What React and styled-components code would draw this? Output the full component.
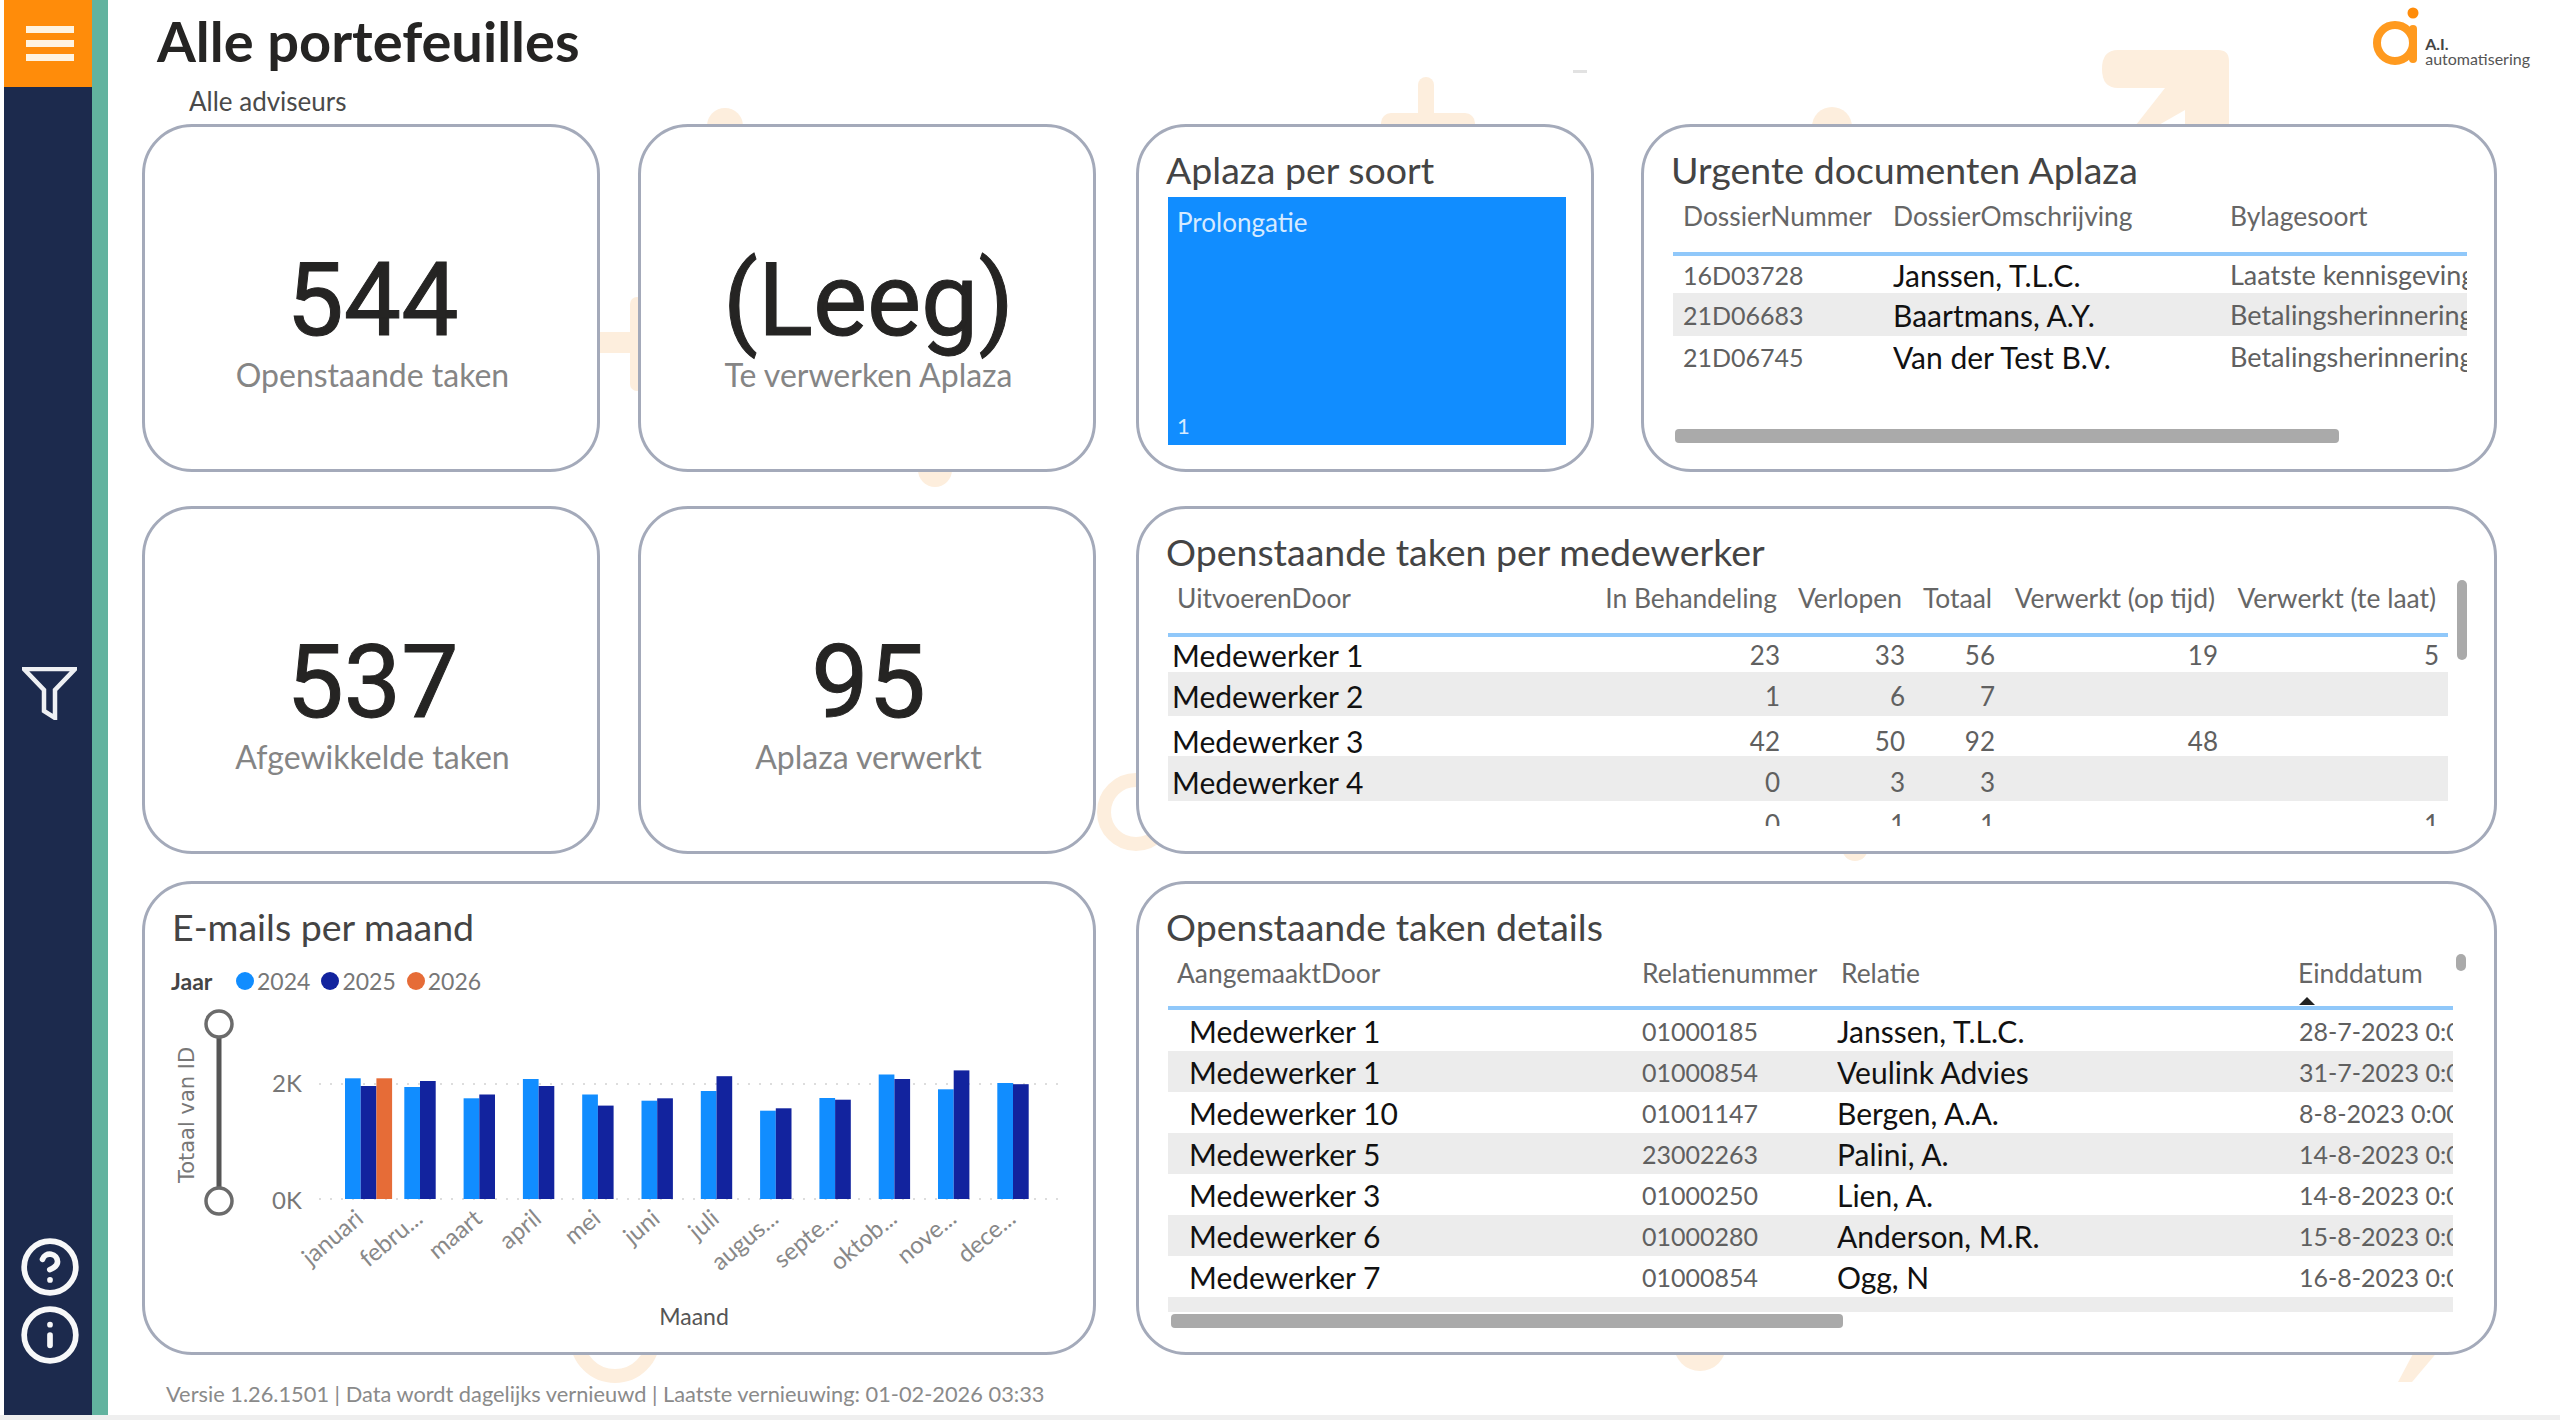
import styled, { createGlobalStyle } from "styled-components";
import { CircleHelp, Info } from "lucide-react";

const GlobalStyle = createGlobalStyle`
  html, body {
    margin: 0;
    padding: 0;
    background: #fff;
  }

  * {
    box-sizing: border-box;
  }
`;

const urgentRows = [
  { h: 37, cells: ["16D03728", "Janssen, T.L.C.", "Laatste kennisgeving"] },
  { h: 43, cells: ["21D06683", "Baartmans, A.Y.", "Betalingsherinnering"], shade: true },
  { h: 42, cells: ["21D06745", "Van der Test B.V.", "Betalingsherinnering"] },
];

const taskRows = [
  { h: 35, pad: 0, name: "Medewerker 1", cells: ["23", "33", "56", "19", "5"] },
  { h: 44, pad: 3, name: "Medewerker 2", cells: ["1", "6", "7", "", ""], shade: true },
  { h: 40, pad: 7, name: "Medewerker 3", cells: ["42", "50", "92", "48", ""] },
  { h: 45, pad: 6, name: "Medewerker 4", cells: ["0", "3", "3", "", ""], shade: true },
  { h: 42, pad: 4, name: "", cells: ["0", "1", "1", "", "1"] },
];

const detailRows = [
  ["Medewerker 1", "01000185", "Janssen, T.L.C.", "28-7-2023 0:00"],
  ["Medewerker 1", "01000854", "Veulink Advies", "31-7-2023 0:00"],
  ["Medewerker 10", "01001147", "Bergen, A.A.", "8-8-2023 0:00"],
  ["Medewerker 5", "23002263", "Palini, A.", "14-8-2023 0:00"],
  ["Medewerker 3", "01000250", "Lien, A.", "14-8-2023 0:00"],
  ["Medewerker 6", "01000280", "Anderson, M.R.", "15-8-2023 0:00"],
  ["Medewerker 7", "01000854", "Ogg, N", "16-8-2023 0:00"],
  ["", "", "", ""],
];

const months = [
  { label: "januari", bars: [120.7, 113, 120.7] },
  { label: "febru...", bars: [112, 118] },
  { label: "maart", bars: [100.7, 104.5] },
  { label: "april", bars: [120, 113] },
  { label: "mei", bars: [104.5, 93.4] },
  { label: "juni", bars: [98.3, 100.7] },
  { label: "juli", bars: [108, 122.8] },
  { label: "augus...", bars: [88.3, 90.7] },
  { label: "septe...", bars: [101, 99.3] },
  { label: "oktob...", bars: [124.5, 120] },
  { label: "nove...", bars: [109.7, 128.6] },
  { label: "dece...", bars: [116, 114.8] },
];

const barColors = ["#118dff", "#12239e", "#e66c37"];

function Watermarks() {
  return (
    <WatermarkLayer viewBox="0 0 2560 1420" fill="#fdeedd">
      <rect x="1418" y="77" width="16" height="60" rx="8" />
      <rect x="1381" y="113" width="94" height="24" rx="10" />
      <circle cx="1832" cy="127" r="20" />
      <path d="M2118 50 H2218 Q2229 50 2229 61 V130 H2185 V110 L2150 130 H2132 L2165 88 H2118 Q2102 88 2102 69 Q2102 50 2118 50 Z" />
      <circle cx="725" cy="126" r="18" />
      <rect x="630" y="297" width="14" height="94" rx="7" />
      <rect x="600" y="332" width="40" height="21" />
      <circle cx="935" cy="470" r="17" />
      <circle cx="1855" cy="848" r="13" />
      <circle cx="1700" cy="1345" r="26" />
      <polygon points="2415,1350 2439,1350 2412,1382 2398,1382" />
      <FaintRing cx="1136" cy="812" r="32" />
      <FaintRing cx="615" cy="1338" r="38" />
      <rect x="1573" y="70" width="14" height="3" fill="#e2e2e2" />
    </WatermarkLayer>
  );
}

function Kpi({ value, label }) {
  return (
    <KpiCard>
      <KpiValue>{value}</KpiValue>
      <KpiLabel>{label}</KpiLabel>
    </KpiCard>
  );
}

function EmailChart() {
  return (
    <ChartSvg viewBox="0 0 900 340">
      <text x="-116" y="20" transform="rotate(-90)" textAnchor="middle" fontFamily="DejaVu Sans, sans-serif" fontSize="21" fill="#777">
        Totaal van ID
      </text>
      <line x1="45" y1="38" x2="45" y2="189" stroke="#555" strokeWidth="5" />
      <circle cx="45" cy="25" r="13" fill="#fff" stroke="#6b6b6b" strokeWidth="3.5" />
      <circle cx="45" cy="202" r="13" fill="#fff" stroke="#6b6b6b" strokeWidth="3.5" />

      <line x1="145" y1="85" x2="893" y2="85" stroke="#ddd" strokeWidth="2" strokeDasharray="2 9" />
      <line x1="145" y1="200" x2="893" y2="200" stroke="#ddd" strokeWidth="2" strokeDasharray="2 9" />
      <AxisValue x="98" y="93">2K</AxisValue>
      <AxisValue x="98" y="210">0K</AxisValue>

      {months.map((month, i) => {
        const groupX = 171 + i * 59.3;
        return (
          <g key={month.label}>
            {month.bars.map((height, j) => (
              <rect key={j} x={groupX + j * 15.7} y={200 - height} width="15.7" height={height} fill={barColors[j]} />
            ))}
            <MonthLabel x={groupX + 20} y="222" textAnchor="end" transform={`rotate(-40 ${groupX + 20} 222)`}>
              {month.label}
            </MonthLabel>
          </g>
        );
      })}

      <AxisTitle x="520" y="326" textAnchor="middle">Maand</AxisTitle>
    </ChartSvg>
  );
}

export default function App() {
  return (
    <>
      <GlobalStyle />
      <Page>
        <Watermarks />
        <Shell>
          <Sidebar>
            <MenuButton>
              <MenuBar />
              <MenuBar />
              <MenuBar />
            </MenuButton>
            <FilterIcon viewBox="0 0 55 53">
              <path d="M2 2 H53 L33 23 V51 L22 44 V23 Z" fill="none" stroke="#eef0f3" strokeWidth="4.5" strokeLinejoin="miter" />
            </FilterIcon>
            <SideFoot>
              <CircleHelp size={62} strokeWidth={2.2} color="#f7f8f9" />
              <Info size={62} strokeWidth={2.2} color="#f7f8f9" />
            </SideFoot>
          </Sidebar>
          <AccentStripe />

          <Main>
            <Header>
              <div>
                <PageTitle>Alle portefeuilles</PageTitle>
                <Subtitle>Alle adviseurs</Subtitle>
              </div>
              <Logo>
                <svg width="46" height="66" viewBox="0 0 46 66">
                  <circle cx="22" cy="37" r="18" fill="none" stroke="#ff9a1f" strokeWidth="8" />
                  <rect x="36" y="19" width="8" height="38" rx="4" fill="#ff9a1f" />
                  <circle cx="40" cy="7" r="5.5" fill="#ff8c0a" />
                </svg>
                <LogoText>
                  <strong>A.I.</strong>
                  <span>automatisering</span>
                </LogoText>
              </Logo>
            </Header>

            <Row>
              <Pair>
                <Kpi value="544" label="Openstaande taken" />
                <Kpi value="(Leeg)" label="Te verwerken Aplaza" />
              </Pair>
              <TopRight>
                <SmallCard>
                  <CardTitle>Aplaza per soort</CardTitle>
                  <Tile>
                    <span>Prolongatie</span>
                    <span>1</span>
                  </Tile>
                </SmallCard>
                <WideCard>
                  <CardTitle>Urgente documenten Aplaza</CardTitle>
                  <TableWrap $width={794}>
                    <HeadRow $columns="220px 337px 1fr" $inset={10} $height={66}>
                      <span>DossierNummer</span>
                      <span>DossierOmschrijving</span>
                      <span>Bylagesoort</span>
                    </HeadRow>
                    {urgentRows.map((row) => (
                      <DataRow key={row.cells[0]} $columns="220px 337px 1fr" $inset={10} $h={row.h} $shade={row.shade}>
                        <MutedCell>{row.cells[0]}</MutedCell>
                        <NameCell>{row.cells[1]}</NameCell>
                        <MutedCell $size={27}>{row.cells[2]}</MutedCell>
                      </DataRow>
                    ))}
                    <HorizontalThumb $left={2} $width={664} $top={239} />
                  </TableWrap>
                </WideCard>
              </TopRight>
            </Row>

            <Row $top={34}>
              <Pair>
                <Kpi value="537" label="Afgewikkelde taken" />
                <Kpi value="95" label="Aplaza verwerkt" />
              </Pair>
              <Card $height={348}>
                <CardTitle>Openstaande taken per medewerker</CardTitle>
                <TableWrap $width={1280}>
                  <HeadRow $columns="422px 190px 125px 90px 223px 221px 9px" $inset={9} $height={65} $numeric>
                    <span>UitvoerenDoor</span>
                    <span>In Behandeling</span>
                    <span>Verlopen</span>
                    <span>Totaal</span>
                    <span>Verwerkt (op tijd)</span>
                    <span>Verwerkt (te laat)</span>
                  </HeadRow>
                  <ClippedBody $height={189}>
                    {taskRows.map((row, i) => (
                      <DataRow key={i} $columns="422px 190px 125px 90px 223px 221px 9px" $inset={4} $h={row.h} $pad={row.pad} $shade={row.shade} $numeric>
                        <NameCell>{row.name}</NameCell>
                        {row.cells.map((cell, j) => (
                          <MutedCell key={j} $size={26}>{cell}</MutedCell>
                        ))}
                      </DataRow>
                    ))}
                  </ClippedBody>
                  <VerticalThumb $top={8} $height={80} $right={-19} />
                </TableWrap>
              </Card>
            </Row>

            <Row $top={27}>
              <Card $height={474}>
                <CardTitle>E-mails per maand</CardTitle>
                <Legend>
                  <LegendName>Jaar</LegendName>
                  <LegendItem $color={barColors[0]}>2024</LegendItem>
                  <LegendItem $color={barColors[1]}>2025</LegendItem>
                  <LegendItem $color={barColors[2]}>2026</LegendItem>
                </Legend>
                <EmailChart />
              </Card>
              <Card $height={474}>
                <CardTitle>Openstaande taken details</CardTitle>
                <TableWrap $width={1285}>
                  <HeadRow $columns="474px 199px 457px 1fr" $inset={9} $height={63}>
                    <span>AangemaaktDoor</span>
                    <span>Relatienummer</span>
                    <span>Relatie</span>
                    <span>Einddatum</span>
                    <SortMark />
                  </HeadRow>
                  <ClippedBody $height={302}>
                    {detailRows.map((cells, i) => (
                      <DataRow key={i} $columns="474px 195px 462px 1fr" $inset={21} $h={41} $shade={i % 2 === 1}>
                        <NameCell>{cells[0]}</NameCell>
                        <MutedCell>{cells[1]}</MutedCell>
                        <NameCell>{cells[2]}</NameCell>
                        <MutedCell>{cells[3]}</MutedCell>
                      </DataRow>
                    ))}
                  </ClippedBody>
                  <HorizontalThumb $left={3} $width={672} $top={367} />
                  <VerticalThumb $top={7} $height={17} $right={-13} />
                </TableWrap>
              </Card>
            </Row>

            <Footer>Versie 1.26.1501 | Data wordt dagelijks vernieuwd | Laatste vernieuwing: 01-02-2026 03:33</Footer>
          </Main>
        </Shell>
        <BottomEdge />
      </Page>
    </>
  );
}

const Page = styled.div`
  position: relative;
  width: 2560px;
  height: 1420px;
  overflow: hidden;
  background: #fff;
  font-family: "Lato", "Noto Sans", sans-serif;
`;

const WatermarkLayer = styled.svg`
  position: absolute;
  top: 0;
  left: 0;
  width: 2560px;
  height: 1420px;
`;

const FaintRing = styled.circle`
  fill: none;
  stroke: #fdeedd;
  stroke-width: 14;
`;

const Shell = styled.div`
  position: relative;
  display: flex;
  height: 1415px;
  padding-left: 4px;
`;

const BottomEdge = styled.div`
  position: relative;
  height: 5px;
  background: #efefef;
`;

const Sidebar = styled.aside`
  display: flex;
  flex-direction: column;
  align-items: center;
  width: 88px;
  background: #1c2a4d;
`;

const MenuButton = styled.div`
  display: flex;
  flex-direction: column;
  align-items: center;
  justify-content: center;
  gap: 7px;
  width: 100%;
  height: 87px;
  padding-left: 3px;
  background: #ff8c0a;
`;

const MenuBar = styled.span`
  width: 48px;
  height: 7px;
  background: #fff3e0;
`;

const FilterIcon = styled.svg`
  width: 55px;
  height: 53px;
  margin: 580px 0 0 3px;
`;

const SideFoot = styled.div`
  display: flex;
  flex-direction: column;
  align-items: center;
  gap: 6px;
  margin: auto 0 49px 3px;
`;

const AccentStripe = styled.div`
  width: 16px;
  background: #62b39f;
`;

const Main = styled.main`
  display: flex;
  flex-direction: column;
  flex: 1;
  padding: 0 63px 0 34px;
`;

const Header = styled.header`
  display: flex;
  justify-content: space-between;
  align-items: flex-start;
  height: 124px;
  margin-right: -33px;
`;

const PageTitle = styled.h1`
  margin: 9px 0 0 15px;
  font-size: 56px;
  line-height: 64px;
  font-weight: 700;
  color: #252423;
`;

const Subtitle = styled.div`
  margin: 12px 0 0 47px;
  font-size: 26px;
  line-height: 32px;
  color: #4a4a4a;
`;

const Logo = styled.div`
  display: flex;
  align-items: flex-start;
  gap: 6px;
  margin-top: 6px;
`;

const LogoText = styled.div`
  display: flex;
  flex-direction: column;
  margin-top: 30px;
  font-size: 16px;
  line-height: 15px;
  color: #555;

  strong {
    font-size: 16px;
    color: #444;
  }
`;

const Row = styled.section`
  display: grid;
  grid-template-columns: 954px 1361px;
  column-gap: 40px;
  margin-top: ${({ $top }) => $top || 0}px;
`;

const Pair = styled.div`
  display: flex;
  gap: 38px;
`;

const TopRight = styled.div`
  display: flex;
  gap: 47px;
`;

const Card = styled.article`
  position: relative;
  height: ${({ $height }) => $height}px;
  padding: 23px 0 0 29px;
  border: 3px solid #a4aaba;
  border-radius: 50px;
  background: #fff;
`;

const SmallCard = styled(Card)`
  width: 458px;
  height: 348px;
`;

const WideCard = styled(Card)`
  width: 856px;
  height: 348px;
`;

const KpiCard = styled(Card)`
  display: flex;
  flex-direction: column;
  align-items: center;
  width: 458px;
  height: 348px;
  padding: 0 0 0 3px;
`;

const KpiValue = styled.div`
  margin-top: 121px;
  font-family: "Roboto", sans-serif;
  font-size: 102px;
  line-height: 104px;
  font-weight: 400;
  color: #252423;
  -webkit-text-stroke: 1px #252423;
`;

const KpiLabel = styled.div`
  margin-top: 5px;
  font-size: 32px;
  line-height: 36px;
  color: #858585;
`;

const CardTitle = styled.h2`
  margin: 0 0 0 -2px;
  font-size: 37.5px;
  line-height: 40px;
  font-weight: 400;
  color: #444;
`;

const Tile = styled.div`
  display: flex;
  flex-direction: column;
  justify-content: space-between;
  width: 398px;
  height: 248px;
  margin-top: 7px;
  padding: 10px 9px 4px;
  background: #118dff;
  font-size: 26px;
  line-height: 30px;
  color: #d6eaff;

  span:last-child {
    font-size: 22px;
  }
`;

const TableWrap = styled.div`
  position: relative;
  width: ${({ $width }) => $width}px;
`;

const HeadRow = styled.div`
  position: relative;
  display: grid;
  grid-template-columns: ${({ $columns }) => $columns};
  height: ${({ $height }) => $height}px;
  padding-top: 10px;
  border-bottom: 4px solid #90c8fa;
  font-size: 26.4px;
  line-height: 32px;
  color: #666;
  white-space: nowrap;

  span:first-child {
    padding-left: ${({ $inset }) => $inset}px;
  }

  span:not(:first-child) {
    padding-right: ${({ $numeric }) => ($numeric ? 3 : 0)}px;
    text-align: ${({ $numeric }) => ($numeric ? "right" : "left")};
  }
`;

const SortMark = styled.i`
  position: absolute;
  left: 1131px;
  top: 50px;
  width: 0;
  height: 0;
  border-left: 8px solid transparent;
  border-right: 8px solid transparent;
  border-bottom: 8px solid #222;
`;

const DataRow = styled.div`
  display: grid;
  grid-template-columns: ${({ $columns }) => $columns};
  align-items: center;
  height: ${({ $h }) => $h}px;
  padding-top: ${({ $pad }) => $pad || 0}px;
  background: ${({ $shade }) => ($shade ? "#ececec" : "transparent")};
  white-space: nowrap;
  overflow: hidden;

  > *:first-child {
    padding-left: ${({ $inset }) => $inset}px;
  }

  > *:not(:first-child) {
    overflow: hidden;
    text-align: ${({ $numeric }) => ($numeric ? "right" : "left")};
  }
`;

const ClippedBody = styled.div`
  height: ${({ $height }) => $height}px;
  overflow: hidden;
`;

const NameCell = styled.div`
  font-size: 30px;
  line-height: 36px;
  color: #111;
`;

const MutedCell = styled.div`
  font-size: ${({ $size }) => $size || 25}px;
  line-height: 36px;
  color: #606060;
`;

const HorizontalThumb = styled.div`
  position: absolute;
  left: ${({ $left }) => $left}px;
  top: ${({ $top }) => $top}px;
  width: ${({ $width }) => $width}px;
  height: 14px;
  border-radius: 4px;
  background: #aaa;
`;

const VerticalThumb = styled.div`
  position: absolute;
  right: ${({ $right }) => $right}px;
  top: ${({ $top }) => $top}px;
  width: 10px;
  height: ${({ $height }) => $height}px;
  border-radius: 5px;
  background: #aaa;
`;

const Legend = styled.div`
  display: flex;
  align-items: center;
  height: 24px;
  margin: 22px 0 0 -3px;
  font-size: 23px;
  color: #777;
`;

const LegendName = styled.span`
  width: 65px;
  font-size: 23px;
  font-weight: 700;
  color: #444;
`;

const LegendItem = styled.span`
  display: flex;
  align-items: center;
  gap: 3px;
  margin-right: 11px;

  &::before {
    content: "";
    width: 18px;
    height: 18px;
    border-radius: 50%;
    background: ${({ $color }) => $color};
  }
`;

const ChartSvg = styled.svg`
  display: block;
  width: 900px;
  height: 340px;
  margin-top: 6px;
`;

const AxisValue = styled.text`
  font-family: "Lato", sans-serif;
  font-size: 24px;
  fill: #777;
`;

const MonthLabel = styled.text`
  font-family: "Lato", sans-serif;
  font-size: 24px;
  fill: #888;
`;

const AxisTitle = styled.text`
  font-family: "Lato", sans-serif;
  font-size: 23px;
  fill: #555;
`;

const Footer = styled.footer`
  margin: 24px 0 0 24px;
  font-size: 21.8px;
  line-height: 30px;
  color: #8a8a8a;
`;
